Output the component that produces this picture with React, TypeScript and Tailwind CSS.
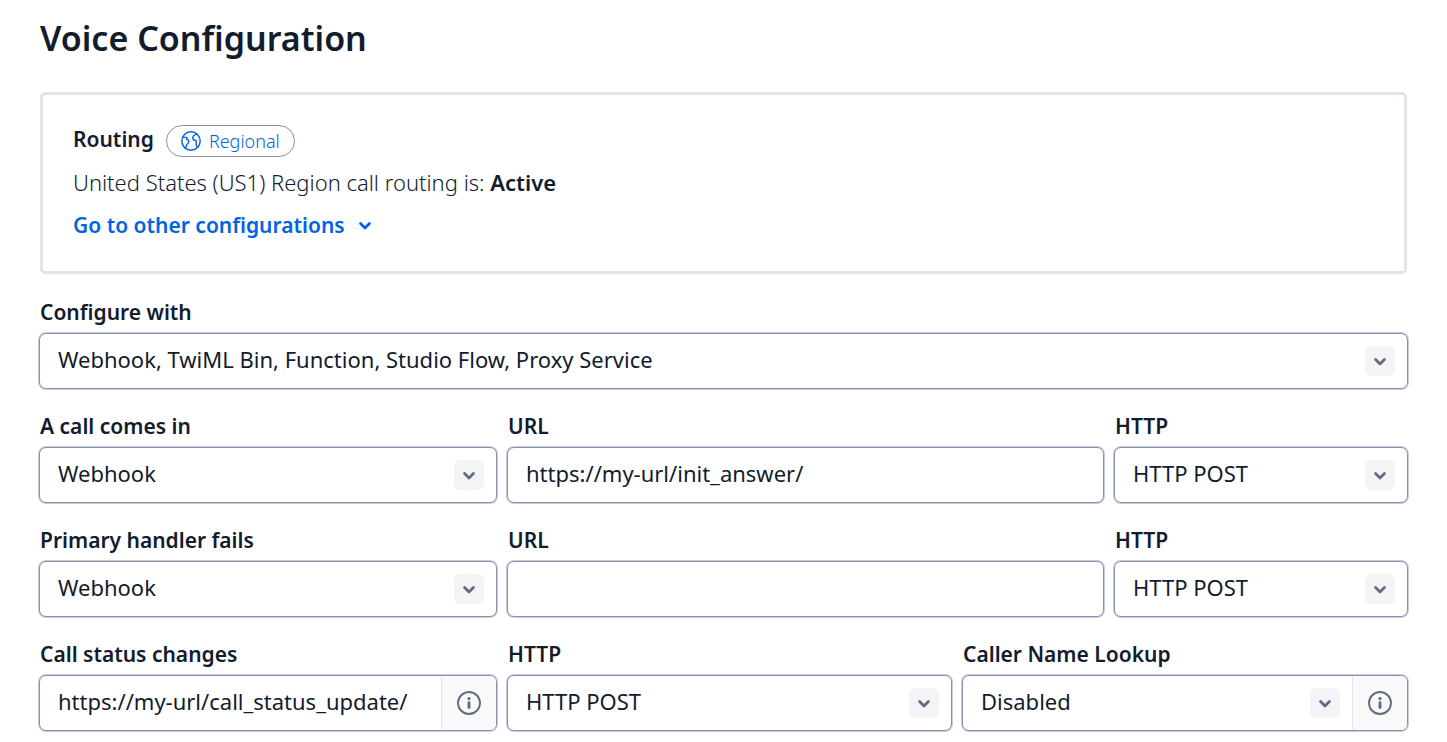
import { useId, type ReactNode } from "react";

const boxClass =
  "-mx-px flex h-14 overflow-hidden rounded-[7px] border border-[#8891aa] bg-white shadow-[0_0_0_1px_rgba(136,145,170,0.45)] focus-within:border-[#0263e0]";

function Chevron({ className }: { className: string }) {
  return (
    <svg viewBox="0 0 12 9" fill="none" stroke="currentColor" strokeWidth="2.8" strokeLinecap="round" strokeLinejoin="round" className={className} aria-hidden="true">
      <path d="M1.6 2.6 6 7 10.4 2.6" />
    </svg>
  );
}

function RegionIcon() {
  return (
    <svg viewBox="0 0 20 20" fill="none" stroke="currentColor" strokeWidth="1.4" strokeLinecap="round" strokeLinejoin="round" className="size-5" aria-hidden="true">
      <circle cx="10" cy="10" r="9.2" />
      <path d="M2 6.4h3.4c.6 0 .8.5.6 1l-.4 1c1.500.2 2.300 1 2.300 2.200 0 1.300-.9 1.900-1.700 2.500-.8.7-.9 1.300-.9 2.100 0 .9-.4 1.600-1.300 2" />
      <path d="M16.400 3.400c-2.700.1-4.600 1.600-4.600 3.600 0 1.500 1 2.200 2.200 2.300.8.100 1.200.5 1.200 1.300v2.800c0 1.300.5 2.100 1.500 2.700" />
    </svg>
  );
}

function InfoButton({ label }: { label: string }) {
  return (
    <button type="button" aria-label={label} className="flex w-[55px] shrink-0 items-center justify-center border-l border-[#e1e3ea] bg-[#f9f9fa] text-[#606b85]">
      <svg viewBox="0 0 24 24" fill="none" stroke="currentColor" strokeLinecap="round" className="size-6" aria-hidden="true">
        <circle cx="12" cy="12" r="11" strokeWidth="1.9" />
        <path d="M12 11.7v4.8" strokeWidth="2.9" />
        <circle cx="12" cy="7.6" r="1.6" fill="currentColor" stroke="none" />
      </svg>
    </button>
  );
}

function Field({ id, label, children }: { id: string; label: string; children: ReactNode }) {
  return (
    <div className="flex min-w-0 flex-col gap-[7px]">
      <label htmlFor={id} className="text-[21px] leading-7 font-semibold">
        {label}
      </label>
      {children}
    </div>
  );
}

function SelectField({ label, value, info }: { label: string; value: string; info?: string }) {
  const id = useId();
  return (
    <Field id={id} label={label}>
      <div className={boxClass}>
        <div className="relative min-w-0 flex-1">
          <select id={id} defaultValue={value} className="size-full appearance-none bg-transparent pr-14 pb-1 pl-[18px] text-[22px] outline-none">
            <option>{value}</option>
          </select>
          <span className="pointer-events-none absolute top-3 right-3 flex size-[30px] items-center justify-center rounded-[6px] bg-[#f4f4f6] text-[#606b85]">
            <Chevron className="h-[9px] w-3" />
          </span>
        </div>
        {info && <InfoButton label={info} />}
      </div>
    </Field>
  );
}

function TextField({ label, value, info }: { label: string; value: string; info?: string }) {
  const id = useId();
  return (
    <Field id={id} label={label}>
      <div className={boxClass}>
        <input id={id} type="text" defaultValue={value} className="min-w-0 flex-1 bg-transparent pr-3 pb-1 pl-[18px] text-[22px] outline-none" />
        {info && <InfoButton label={info} />}
      </div>
    </Field>
  );
}

function HandlerRow({ label, url }: { label: string; url: string }) {
  return (
    <div className="grid grid-cols-[456fr_595fr_292fr] gap-3">
      <SelectField label={label} value="Webhook" />
      <TextField label="URL" value={url} />
      <SelectField label="HTTP" value="HTTP POST" />
    </div>
  );
}

export default function App() {
  return (
    <main className="bg-white px-10 pt-4 pb-3 font-['Noto_Sans',sans-serif] text-[#121c2d]">
      <h1 className="text-[34px] leading-[44px] font-semibold">Voice Configuration</h1>

      <section className="mt-8 rounded-[5px] border-[3px] border-[#e1e4e8] px-[30px] pt-[30px] pb-8">
        <div className="flex items-start gap-3">
          <h2 className="text-[21px] leading-7 font-semibold">Routing</h2>
          <span className="flex h-8 items-center gap-2 rounded-full border border-[#8891aa] px-[14px] text-lg font-light text-[#0263e0]">
            <RegionIcon />
            Regional
          </span>
        </div>
        <p className="mt-[11px] text-[22px] leading-7 font-light">
          United States (US1) Region call routing is: <strong className="font-semibold">Active</strong>
        </p>
        <button type="button" className="mt-[15px] flex items-center gap-[14px] text-[21px] leading-7 font-semibold text-[#0263e0]">
          Go to other configurations
          <Chevron className="h-[9px] w-3" />
        </button>
      </section>

      <form className="mt-6 flex flex-col gap-[23px]">
        <SelectField label="Configure with" value="Webhook, TwiML Bin, Function, Studio Flow, Proxy Service" />
        <HandlerRow label="A call comes in" url="https://my-url/init_answer/" />
        <HandlerRow label="Primary handler fails" url="" />
        <div className="grid grid-cols-[456fr_443fr_444fr] gap-3">
          <TextField label="Call status changes" value="https://my-url/call_status_update/" info="About call status changes" />
          <SelectField label="HTTP" value="HTTP POST" />
          <SelectField label="Caller Name Lookup" value="Disabled" info="About caller name lookup" />
        </div>
      </form>
    </main>
  );
}
